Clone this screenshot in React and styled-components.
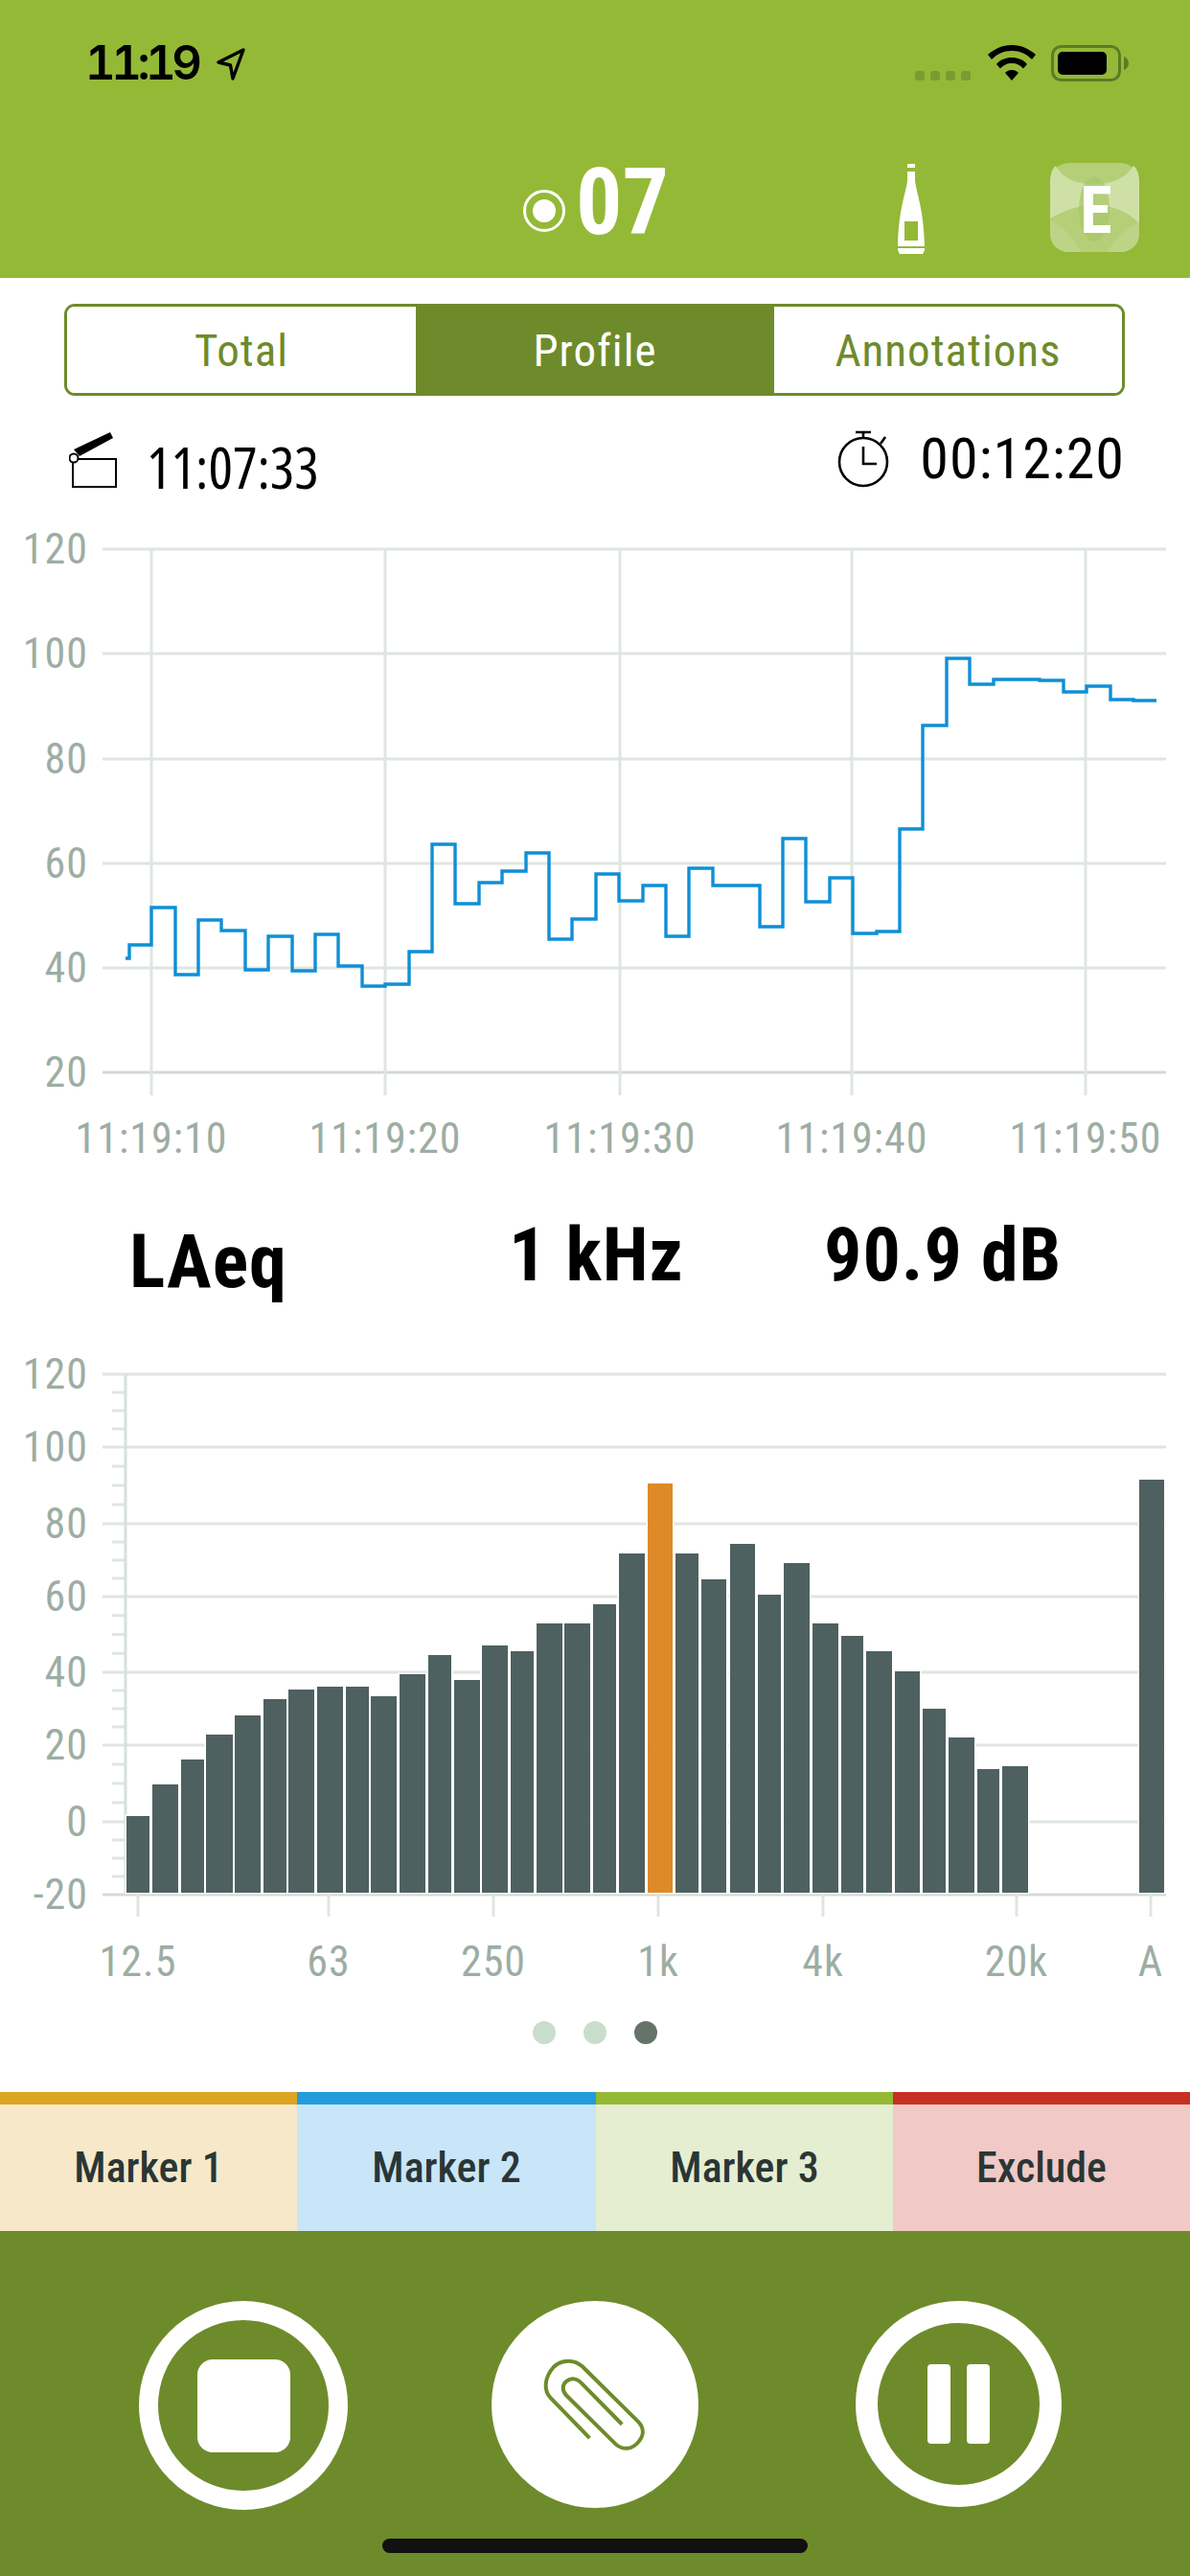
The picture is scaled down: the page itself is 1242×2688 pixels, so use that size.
import React from 'react';
import styled, { createGlobalStyle } from 'styled-components';

const sans = 'Roboto, "Open Sans", sans-serif';

const GlobalStyle = createGlobalStyle`
  html, body {
    margin: 0;
    padding: 0;
    background: #fff;
  }
`;

const Page = styled.div`
  width: 1242px;
  height: 2688px;
  overflow: hidden;
  display: flex;
  flex-direction: column;
  background: #fff;
  font-family: ${sans};
  font-stretch: 75%;
`;

const Header = styled.header`
  height: 290px;
  background: #94b937;
  display: flex;
  flex-direction: column;
  flex: none;
`;

const StatusBar = styled.div`
  display: flex;
  align-items: flex-start;
  height: 121px;
  padding: 47px 63px 0 89px;
  box-sizing: border-box;
`;

const Clock = styled.span`
  font: 600 49px/38px Inter, sans-serif;
  font-feature-settings: 'tnum';
  letter-spacing: -4.5px;
  color: #000;
`;

const ArrowIcon = styled.svg`
  width: 31px;
  height: 34px;
  margin: 3px 0 0 20px;
`;

const Signal = styled.div`
  margin: 27px 18px 0 auto;
  display: flex;
  gap: 6px;
`;

const SignalDot = styled.i`
  width: 10px;
  height: 10px;
  border-radius: 3px;
  background: #7b9a35;
`;

const WifiIcon = styled.svg`
  width: 50px;
  height: 37px;
`;

const BatteryIcon = styled.svg`
  width: 82px;
  height: 38px;
  margin-left: 16px;
`;

const TitleRow = styled.div`
  display: flex;
  align-items: flex-start;
  padding-left: 546px;
`;

const RecordRing = styled.span`
  width: 44px;
  height: 44px;
  margin-top: 77px;
  box-sizing: border-box;
  border: 3px solid #fff;
  border-radius: 50%;
  display: flex;
  align-items: center;
  justify-content: center;
  &::after {
    content: '';
    width: 24px;
    height: 24px;
    border-radius: 50%;
    background: #fff;
  }
`;

const Take = styled.span`
  font-size: 96px;
  font-weight: 700;
  line-height: 70px;
  color: #fff;
  margin: 55px 0 0 11px;
  width: 96px;
  white-space: nowrap;
`;

const BottleIcon = styled.svg`
  width: 28px;
  height: 94px;
  margin: 50px 0 0 240px;
`;

const LogoIcon = styled.svg`
  width: 93px;
  height: 93px;
  margin: 49px 0 0 131px;
`;

const LogoLetter = styled.text`
  font-family: ${sans};
  font-stretch: 75%;
  font-weight: 700;
  font-size: 68px;
  fill: #fff;
`;

const Tabs = styled.nav`
  margin: 27px 68px 0 67px;
  height: 96px;
  box-sizing: border-box;
  border: 3px solid #6e8b2b;
  border-radius: 11px;
  display: grid;
  grid-template-columns: 364px 374px 1fr;
  overflow: hidden;
  flex: none;
`;

const Tab = styled.div`
  display: flex;
  align-items: center;
  justify-content: center;
  font-size: 47px;
  letter-spacing: 1px;
  color: ${(p) => (p.$active ? '#fff' : '#6e8b2b')};
  background: ${(p) => (p.$active ? '#6e8b2b' : '#fff')};
`;

const TimeRow = styled.div`
  display: flex;
  justify-content: space-between;
  height: 60px;
  margin-top: 36px;
  padding: 0 68px 0 72px;
  flex: none;
`;

const TimeGroup = styled.div`
  display: flex;
  gap: ${(p) => p.$gap}px;
  align-items: ${(p) => (p.$low ? 'flex-end' : 'center')};
`;

const TimeText = styled.span`
  font-family: ${(p) => (p.$tight ? '"Open Sans", sans-serif' : sans)};
  font-size: 60px;
  line-height: 44px;
  color: #000;
  letter-spacing: ${(p) => (p.$tight ? 0 : 1)}px;
`;

const TimeIcon = styled.svg`
  width: ${(p) => p.$w}px;
  height: 60px;
  align-self: flex-start;
`;

const ChartSvg = styled.svg`
  display: block;
  width: 1242px;
  height: ${(p) => p.$h}px;
  margin-top: ${(p) => p.$top}px;
  flex: none;
`;

const AxisLabel = styled.text`
  font-family: ${sans};
  font-stretch: 75%;
  font-size: 44px;
  letter-spacing: 1px;
  fill: #9dada3;
`;

const Readouts = styled.div`
  height: 160px;
  flex: none;
  display: grid;
  grid-template-columns: 396px 329px 1fr;
  padding-left: 135px;
  align-items: start;
  font-size: 78px;
  font-weight: 700;
  letter-spacing: 1px;
  color: #000;
`;

const Readout = styled.span`
  line-height: 64px;
  margin-top: ${(p) => p.$top}px;
`;

const Dots = styled.div`
  height: 103px;
  flex: none;
  padding-top: 29px;
  box-sizing: border-box;
  display: flex;
  justify-content: center;
  gap: 29px;
`;

const Dot = styled.i`
  width: 24px;
  height: 24px;
  border-radius: 50%;
  background: ${(p) => (p.$on ? '#66736b' : '#c9ddcd')};
`;

const Markers = styled.div`
  height: 145px;
  flex: none;
  display: grid;
  grid-template-columns: 310px 312px 310px 310px;
`;

const Marker = styled.div`
  border-top: 13px solid ${(p) => p.$accent};
  background: ${(p) => p.$tint};
  color: #2a3636;
  font-size: 44px;
  font-weight: 500;
  display: flex;
  align-items: center;
  justify-content: center;
`;

const Controls = styled.div`
  flex: 1;
  background: #6e8b2b;
  position: relative;
  display: flex;
  align-items: flex-start;
  padding-top: 73px;
  box-sizing: border-box;
`;

const RingButton = styled.div`
  box-sizing: border-box;
  flex: none;
  width: ${(p) => p.$size}px;
  height: ${(p) => p.$size}px;
  margin-left: ${(p) => p.$left}px;
  border-radius: 50%;
  border: ${(p) => p.$ring}px solid #fff;
  display: flex;
  align-items: center;
  justify-content: center;
  gap: 17px;
`;

const ClipButton = styled.div`
  flex: none;
  width: 216px;
  height: 216px;
  margin-left: 150px;
  border-radius: 50%;
  background: #fff;
  display: flex;
  align-items: center;
  justify-content: center;
`;

const StopSquare = styled.span`
  width: 97px;
  height: 97px;
  border-radius: 16px;
  background: #fff;
`;

const PauseBar = styled.span`
  width: 24px;
  height: 83px;
  border-radius: 4px;
  background: #fff;
`;

const ClipIcon = styled.svg`
  width: 110px;
  height: 98px;
`;

const HomeIndicator = styled.span`
  position: absolute;
  left: 399px;
  bottom: 24px;
  width: 444px;
  height: 15px;
  border-radius: 8px;
  background: #111;
`;

// traced from the screenshot: x, y of each corner of the step line, in px
const steps = [
  [131, 1000], [135, 1000], [135, 986], [158, 986], [158, 947], [183, 947], [183, 1017], [207, 1017], [207, 960],
  [231, 960], [231, 971], [256, 971], [256, 1012], [280, 1012], [280, 977], [305, 977], [305, 1013],
  [329, 1013], [329, 975], [353, 975], [353, 1008], [378, 1008], [378, 1029], [402, 1029], [402, 1027],
  [427, 1027], [427, 993], [451, 993], [451, 881], [475, 881], [475, 943], [500, 943], [500, 921],
  [524, 921], [524, 909], [549, 909], [549, 890], [573, 890], [573, 980], [597, 980], [597, 959],
  [622, 959], [622, 912], [646, 912], [646, 940], [671, 940], [671, 924], [695, 924], [695, 977],
  [719, 977], [719, 906], [744, 906], [744, 924], [793, 924], [793, 967], [817, 967], [817, 875],
  [841, 875], [841, 941], [866, 941], [866, 916], [890, 916], [890, 974], [915, 974], [915, 972],
  [939, 972], [939, 865], [963, 865], [963, 757], [988, 757], [988, 687], [1012, 687], [1012, 714],
  [1037, 714], [1037, 709], [1085, 709], [1085, 710], [1110, 710], [1110, 722], [1134, 722], [1134, 716],
  [1159, 716], [1159, 730], [1183, 730], [1183, 731], [1207, 731],
];
const stepPath = steps.map(([x, y], i) => `${i ? 'L' : 'M'}${x} ${y}`).join(' ');

const hours = [
  [158, '11:19:10'], [402, '11:19:20'], [647, '11:19:30'], [889, '11:19:40'], [1133, '11:19:50'],
];

const lineTicks = [
  [573, '120'], [682, '100'], [792, '80'], [901, '60'], [1010, '40'], [1119, '20'],
];

const barTicks = [
  [1434, '120'], [1510, '100'], [1590, '80'], [1666, '60'], [1745, '40'], [1821, '20'], [1901, '0'], [1977, '-20'],
];

const freqTicks = [
  [144, '12.5'], [343, '63'], [515, '250'], [687, '1k'], [859, '4k'], [1061, '20k'], [1201, 'A'],
];

// [left, width, top] of each band
const bars = [
  [132, 24, 1895], [159, 27, 1862], [189, 24, 1836], [215, 28, 1810], [245, 27, 1790], [275, 24, 1773],
  [301, 27, 1763], [331, 27, 1760], [361, 24, 1760], [387, 27, 1770], [417, 27, 1747], [447, 24, 1727],
  [474, 27, 1753], [503, 27, 1717], [533, 24, 1723], [560, 27, 1694], [589, 27, 1694], [619, 24, 1674],
  [646, 27, 1621], [676, 26, 1548, true], [705, 24, 1621], [732, 26, 1648], [762, 26, 1611], [791, 24, 1664],
  [818, 27, 1631], [848, 27, 1694], [878, 23, 1707], [904, 27, 1723], [934, 26, 1744], [963, 24, 1783],
  [990, 27, 1813], [1020, 23, 1846], [1046, 27, 1843], [1189, 26, 1544],
];

const minorTicks = [];
barTicks.slice(0, -1).forEach(([y], i) => {
  const next = barTicks[i + 1][0];
  [1, 2, 3].forEach((n) => minorTicks.push(y + ((next - y) * n) / 4));
});

function LineChart() {
  return (
    <ChartSvg $h={700} $top={31} viewBox="0 540 1242 700">
      {lineTicks.map(([y, label]) => (
        <g key={label}>
          <line x1="107" x2="1217" y1={y} y2={y} stroke={label === '20' ? '#d3dad4' : '#dfe6e0'} strokeWidth="3" />
          <AxisLabel x="92" y={y + 15} textAnchor="end">{label}</AxisLabel>
        </g>
      ))}
      {hours.map(([x, label]) => (
        <g key={label}>
          <line x1={x} x2={x} y1="573" y2="1143" stroke="#dfe6e0" strokeWidth="3" />
          <AxisLabel x={x} y="1203" textAnchor="middle">{label}</AxisLabel>
        </g>
      ))}
      <path d={stepPath} fill="none" stroke="#0f8fd6" strokeWidth="3.4" />
    </ChartSvg>
  );
}

function BandChart() {
  return (
    <ChartSvg $h={680} $top={0} viewBox="0 1400 1242 680">
      {barTicks.map(([y, label]) => (
        <g key={label}>
          <line x1="107" x2="1217" y1={y} y2={y} stroke={label === '-20' ? '#d3dad4' : '#dfe6e0'} strokeWidth="3" />
          <AxisLabel x="92" y={y + 15} textAnchor="end">{label}</AxisLabel>
        </g>
      ))}
      {minorTicks.map((y) => (
        <line key={y} x1="117" x2="131" y1={y} y2={y} stroke="#dfe6e0" strokeWidth="3" />
      ))}
      <line x1="131" x2="131" y1="1434" y2="1977" stroke="#d8e0da" strokeWidth="3" />
      {freqTicks.map(([x, label]) => (
        <g key={label}>
          <line x1={x} x2={x} y1="1977" y2="2000" stroke="#dfe6e0" strokeWidth="3" />
          <AxisLabel x={x} y="2062" textAnchor="middle">{label}</AxisLabel>
        </g>
      ))}
      {bars.map(([x, w, top, hot]) => (
        <rect
          key={x}
          x={x}
          y={top}
          width={w}
          height={1975 - top}
          fill={hot ? '#de8a28' : '#4e6160'}
          stroke="#fff"
          strokeWidth="3"
          paintOrder="stroke"
        />
      ))}
    </ChartSvg>
  );
}

export default function App() {
  return (
    <Page>
      <GlobalStyle />
      <Header>
        <StatusBar>
          <Clock>11:19</Clock>
          <ArrowIcon viewBox="0 0 31 34">
            <path d="M28 2 L2 15 L14.5 18 L17 32 Z" fill="none" stroke="#000" strokeWidth="3.4" strokeLinejoin="round" />
          </ArrowIcon>
          <Signal>
            <SignalDot />
            <SignalDot />
            <SignalDot />
            <SignalDot />
          </Signal>
          <WifiIcon viewBox="0 0 50 37">
            <path d="M25 0 C15 0 7 4 0 10 L4 15 C10 9 17 6 25 6 C33 6 40 9 46 15 L50 10 C43 4 35 0 25 0 Z" />
            <path d="M25 13 C19 13 13 15 9 20 L13 24.5 C16 21 20 19 25 19 C30 19 34 21 37 24.5 L41 20 C37 15 31 13 25 13 Z" />
            <path d="M25 26 C22 26 20 27 18 29 L25 37 L32 29 C30 27 28 26 25 26 Z" />
          </WifiIcon>
          <BatteryIcon viewBox="0 0 82 38">
            <rect x="1.5" y="1.5" width="70" height="35" rx="9" fill="none" stroke="#5d7b25" strokeWidth="3" />
            <rect x="7" y="7" width="51" height="24" rx="5" fill="#000" />
            <path d="M76 12 C79 13 81 16 81 19 C81 22 79 25 76 26 Z" fill="#5d7b25" />
          </BatteryIcon>
        </StatusBar>
        <TitleRow>
          <RecordRing />
          <Take>07</Take>
          <BottleIcon viewBox="0 0 28 94">
            <path fill="#fff" d="M10 0 H18 V4 H10 Z M10 8 H18 V17 C19 30 28 48 28 90 L26 94 H2 L0 90 C0 48 9 30 10 17 Z" />
            <rect x="7" y="60" width="14" height="20" fill="#94b937" />
            <rect x="0" y="86" width="28" height="2" fill="#94b937" />
          </BottleIcon>
          <LogoIcon viewBox="0 0 93 93">
            <rect width="93" height="93" rx="20" fill="#b4cf78" />
            <path d="M6 3 C14 18 30 22 46 22 C62 22 78 18 87 3 C91 6 93 12 93 20 V64 C86 54 68 44 46 44 C24 44 8 54 0 58 V20 C0 12 2 6 6 3 Z" fill="#cfe0a6" />
            <path d="M0 60 C14 66 26 80 32 93 H20 C8 93 0 85 0 73 Z M93 62 C80 68 66 80 60 93 H73 C85 93 93 85 93 73 Z" fill="#bdd486" />
            <ellipse cx="46" cy="48" rx="16" ry="34" fill="#a9c668" opacity="0.7" />
            <LogoLetter x="48" y="73" textAnchor="middle">E</LogoLetter>
          </LogoIcon>
        </TitleRow>
      </Header>

      <Tabs>
        <Tab>Total</Tab>
        <Tab $active>Profile</Tab>
        <Tab>Annotations</Tab>
      </Tabs>

      <TimeRow>
        <TimeGroup $gap={31} $low>
          <TimeIcon $w={50} viewBox="0 0 50 60">
            <path d="M5 20 L43 2 L46 8 L11 27 Z" fill="#000" />
            <rect x="4" y="30" width="45" height="29" fill="none" stroke="#000" strokeWidth="2" />
            <circle cx="5" cy="29" r="4.5" fill="#fff" stroke="#000" strokeWidth="2" />
          </TimeIcon>
          <TimeText $tight>11:07:33</TimeText>
        </TimeGroup>
        <TimeGroup $gap={32}>
          <TimeIcon $w={54} viewBox="0 0 54 60">
            <circle cx="27" cy="33" r="25" fill="none" stroke="#000" strokeWidth="2.6" />
            <path d="M19 2 H35 M27 2 V8 M45 14 L50 7 M27 17 V35 H41" fill="none" stroke="#000" strokeWidth="2.6" />
          </TimeIcon>
          <TimeText>00:12:20</TimeText>
        </TimeGroup>
      </TimeRow>

      <LineChart />

      <Readouts>
        <Readout $top={45}>LAeq</Readout>
        <Readout $top={38}>1 kHz</Readout>
        <Readout $top={38}>90.9 dB</Readout>
      </Readouts>

      <BandChart />

      <Dots>
        <Dot />
        <Dot />
        <Dot $on />
      </Dots>

      <Markers>
        <Marker $accent="#dca522" $tint="#f6e8c8">Marker 1</Marker>
        <Marker $accent="#229cdc" $tint="#c8e6f7">Marker 2</Marker>
        <Marker $accent="#93b935" $tint="#e5eed1">Marker 3</Marker>
        <Marker $accent="#c72f23" $tint="#f1c9c7">Exclude</Marker>
      </Markers>

      <Controls>
        <RingButton $size={218} $ring={20} $left={145}>
          <StopSquare />
        </RingButton>
        <ClipButton>
          <ClipIcon viewBox="260 240 330 295">
            <path
              d="M408 493 L284 365 C262 340 268 300 295 270 C320 245 360 245 385 268 L562 443 C582 465 578 490 555 512 C535 530 510 530 490 512 L338 362 C320 345 322 325 335 315 C350 303 368 305 382 320 L510 450"
              fill="none"
              stroke="#6e8b2b"
              strokeWidth="12"
            />
          </ClipIcon>
        </ClipButton>
        <RingButton $size={215} $ring={23} $left={164}>
          <PauseBar />
          <PauseBar />
        </RingButton>
        <HomeIndicator />
      </Controls>
    </Page>
  );
}
